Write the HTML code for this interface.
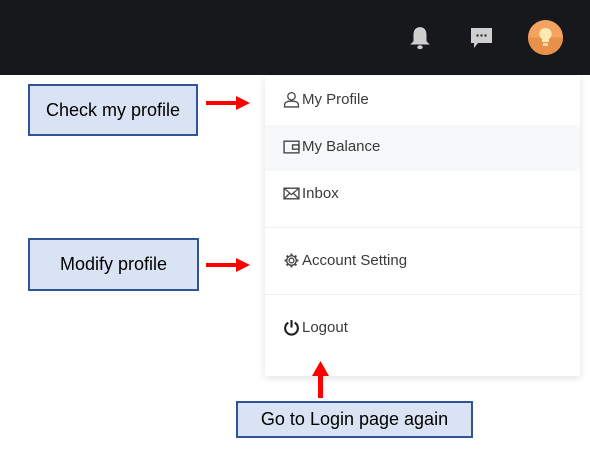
<!DOCTYPE html>
<html><head><style>
body{margin:0;width:590px;height:457px;background:#fff;position:relative;overflow:hidden;font-family:"Liberation Sans",sans-serif}
.hdr{position:absolute;left:0;top:0;width:590px;height:75px;background:#16181c}
.panel{position:absolute;left:265px;top:76px;width:315px;height:300px;background:#fff;box-shadow:0 2px 8px rgba(0,0,0,.12)}
.it{position:absolute;left:18px;font-size:15px;color:#3a3a3a;display:flex;align-items:center;gap:2px}
.it svg{width:17px;height:17px}
.hl{position:absolute;left:0;top:49px;width:315px;height:46px;background:#f7f8fa}
.div{position:absolute;left:0;width:315px;height:1px;background:#f0f0f0}
.box{position:absolute;background:#dae3f3;border:2px solid #2f5597;box-sizing:border-box;display:flex;align-items:center;justify-content:center;font-family:"Liberation Sans",sans-serif;font-size:18px;color:#000}
</style></head><body>
<div class="hdr">
<svg style="position:absolute;left:408px;top:25px" width="24" height="26" viewBox="0 0 22 24"><path d="M11 2c-4 0-6 3-6 7v6l-3 3h18l-3-3V9c0-4-2-7-6-7z" fill="#cfcfcf"/><ellipse cx="11" cy="20.5" rx="2.5" ry="1.8" fill="#cfcfcf"/></svg>
<svg style="position:absolute;left:469px;top:27px" width="25" height="24" viewBox="0 0 25 24"><path d="M2 1h21v15H9l-4 5v-5H2z" fill="#cfcfcf"/><circle cx="8.5" cy="8.5" r="1.2" fill="#333"/><circle cx="12.5" cy="8.5" r="1.2" fill="#333"/><circle cx="16.5" cy="8.5" r="1.2" fill="#333"/></svg>
<svg style="position:absolute;left:528px;top:20px" width="35" height="35" viewBox="0 0 35 35"><circle cx="17.5" cy="17.5" r="17.5" fill="#f4a460"/><path d="M0 17.5h35a17.5 17.5 0 0 1-35 0z" fill="#e8914a"/><path d="M17.5 8a6 6 0 0 0-3.5 11v3h7v-3a6 6 0 0 0-3.5-11z" fill="#fbe9b0"/><rect x="15" y="23" width="5" height="3" fill="#f6dca0"/></svg>
</div>
<div class="panel">
<div class="hl"></div>
<div class="it" style="top:15px"><svg viewBox="0 0 16 16"><circle cx="8" cy="5" r="3.5" fill="none" stroke="#444" stroke-width="1.2"/><path d="M1.5 15v-2c0-2 2-3.5 6.5-3.5s6.5 1.5 6.5 3.5v2z" fill="none" stroke="#444" stroke-width="1.2"/></svg>My Profile</div>
<div class="it" style="top:62px"><svg viewBox="0 0 16 16"><rect x="1" y="3" width="14" height="11" fill="none" stroke="#444" stroke-width="1.3"/><rect x="9" y="6.5" width="6" height="4" fill="none" stroke="#444" stroke-width="1.3"/></svg>My Balance</div>
<div class="it" style="top:109px"><svg viewBox="0 0 16 16"><rect x="1" y="3" width="14" height="10" fill="none" stroke="#444" stroke-width="1.3"/><path d="M1 3l7 6 7-6M1 13l5-5M15 13l-5-5" fill="none" stroke="#444" stroke-width="1.2"/></svg>Inbox</div>
<div class="div" style="top:151px"></div>
<div class="it" style="top:176px"><svg viewBox="0 0 16 16"><circle cx="8" cy="8" r="2.3" fill="none" stroke="#444" stroke-width="1.2"/><path d="M8 1.5v2M8 12.5v2M1.5 8h2M12.5 8h2M3.4 3.4l1.4 1.4M11.2 11.2l1.4 1.4M3.4 12.6l1.4-1.4M11.2 4.8l1.4-1.4" stroke="#444" stroke-width="1.8"/><circle cx="8" cy="8" r="4.5" fill="none" stroke="#444" stroke-width="1.2"/></svg>Account Setting</div>
<div class="div" style="top:218px"></div>
<div class="it" style="top:243px"><svg viewBox="0 0 16 16"><path d="M5 3.5a6 6 0 1 0 6 0" fill="none" stroke="#222" stroke-width="2"/><path d="M8 1v7" stroke="#222" stroke-width="2"/></svg>Logout</div>
</div>
<div class="box" style="left:28px;top:84px;width:170px;height:52px">Check my profile</div>
<div class="box" style="left:28px;top:238px;width:171px;height:53px">Modify profile</div>
<div class="box" style="left:236px;top:401px;width:237px;height:37px">Go to Login page again</div>
<svg style="position:absolute;left:0;top:0" width="590" height="457"><g fill="red"><rect x="206" y="101" width="32" height="4"/><path d="M236 96l14 7-14 7z"/><rect x="206" y="263" width="32" height="4"/><path d="M236 258l14 7-14 7z"/><rect x="318" y="374" width="5" height="24"/><path d="M312 376l8.5-15 8.5 15z"/></g></svg>
</body></html>
